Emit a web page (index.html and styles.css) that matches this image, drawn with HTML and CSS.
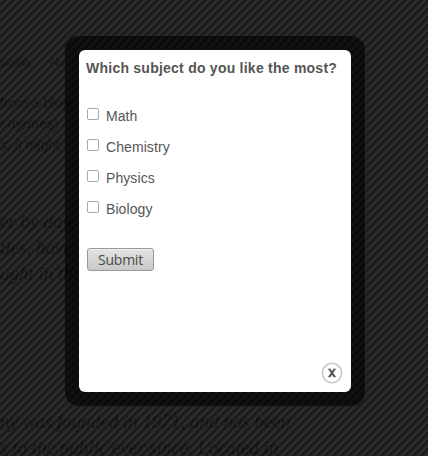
FILE: index.html
```html
<!DOCTYPE html>
<html lang="en">
<head>
<meta charset="utf-8">
<title>Poll</title>
<link rel="stylesheet" href="styles.css">
</head>
<body>
<main class="page">
  <nav class="nav"><span>skuhe</span><span>Nu</span></nav>
  <p class="intro">from a blog<br>t themes)<br>s, it might</p>
  <blockquote class="quote">er by day,<br>ties, have<br>ught in the</blockquote>
  <blockquote class="quote">ny was founded in 1971, and has been<br>s to the public ever since. Located in</blockquote>
</main>
<div class="overlay">
  <div class="frame">
    <form class="dialog">
      <h1 class="question">Which subject do you like the most?</h1>
      <div class="options">
        <label class="option"><input type="checkbox"><span>Math</span></label>
        <label class="option"><input type="checkbox"><span>Chemistry</span></label>
        <label class="option"><input type="checkbox"><span>Physics</span></label>
        <label class="option"><input type="checkbox"><span>Biology</span></label>
      </div>
      <button class="submit" type="button">Submit</button>
      <button class="close" type="button" aria-label="Close">
        <svg width="22" height="22" viewBox="0 0 22 22">
          <circle cx="11" cy="11" r="9.7" fill="#fff" stroke="#cacaca" stroke-width="1.6"/>
          <path d="M8.5 7.2L13.5 14.6M13.5 7.2L8.5 14.6" stroke="#555" stroke-width="2"/>
          <path d="M7 7.2H10M12.2 7.2H15M7 14.6H10M12.2 14.6H15" stroke="#666" stroke-width="1"/>
        </svg>
      </button>
    </form>
  </div>
</div>
</body>
</html>
```
FILE: styles.css
```css
* { box-sizing: border-box; }
body {
  margin: 0;
  height: 456px;
  overflow: hidden;
  background: #202020;
  font-family: "Liberation Sans", Arial, sans-serif;
}
.page {
  height: 456px;
  padding-top: 54px;
  overflow: hidden;
  white-space: nowrap;
  color: #0a0a0a;
}
.nav {
  display: flex;
  gap: 19px;
  font-size: 11.5px;
  line-height: 16px;
}
.intro {
  margin: 23px 0 0;
  font-size: 14px;
  line-height: 21px;
}
.quote {
  margin: 53px 0 0;
  font: italic 19px/26px "Liberation Serif", Georgia, serif;
}
.quote + .quote { margin-top: 122px; }
.overlay {
  position: absolute;
  inset: 0;
  padding: 36px 0 0 65px;
  background: repeating-linear-gradient(135deg, rgba(60, 60, 60, .3) 0, rgba(60, 60, 60, .5) 1.414px, rgba(22, 22, 22, .5) 2.828px, rgba(22, 22, 22, .5) 4.243px, rgba(60, 60, 60, .3) 5.657px);
}
.frame {
  width: 300px;
  height: 370px;
  padding: 14px;
  border-radius: 14px;
  background: rgba(0, 0, 0, .6);
}
.dialog {
  display: flex;
  flex-direction: column;
  align-items: flex-start;
  position: relative;
  height: 342px;
  padding: 9px 0 0 7px;
  border-radius: 6px;
  background: #fff;
  color: #555;
}
.question {
  margin: 0;
  font-size: 14px;
  line-height: 18px;
  letter-spacing: .24px;
  white-space: nowrap;
}
.options {
  display: flex;
  flex-direction: column;
  margin-top: 23px;
}
.option {
  display: flex;
  align-items: center;
  height: 31px;
  gap: 7px;
  padding-left: 1px;
  font-size: 14px;
  letter-spacing: .08px;
}
.option input {
  appearance: none;
  width: 12px;
  height: 12px;
  margin: 0 0 3px;
  border: 1px solid #aaa;
  border-radius: 2px;
  background: #fff;
}
.submit {
  width: 67px;
  height: 23px;
  margin: 24px 0 0 1px;
  padding: 0;
  border: 1px solid #999;
  border-radius: 3px;
  background: linear-gradient(#e4e4e4, #c8c8c8);
  box-shadow: inset 0 1px #f0f0f0;
  color: #484848;
  font: 14px/20px "Open Sans", sans-serif;
  letter-spacing: -.25px;
}
.close {
  position: absolute;
  right: 8px;
  bottom: 8px;
  width: 22px;
  height: 22px;
  padding: 0;
  border: 0;
  background: none;
}
.close svg { display: block; }
```
